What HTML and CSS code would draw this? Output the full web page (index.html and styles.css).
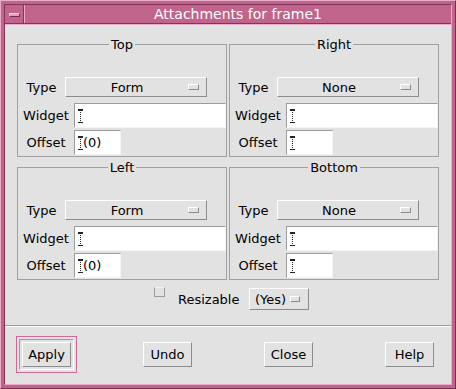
FILE: index.html
```html
<!DOCTYPE html>
<html lang="en">
<head>
  <meta charset="UTF-8">
  <title>Attachments for frame1</title>
  <link rel="stylesheet" href="styles.css">
</head>
<body>

  <div class="window">
    <div class="frame">

      <!-- Title bar -->
      <div class="titlebar">
        <div class="menu-btn"><span class="menu-bar"></span></div>
        <div class="title">Attachments for frame1</div>
      </div>

      <div class="content">

        <!-- Four attachment groups -->
        <div class="groups">

          <fieldset class="group">
            <legend>Top</legend>
            <div class="type-row">
              <span class="type-label">Type</span>
              <div class="option wide"><span class="option-text">Form</span><span class="indicator"></span></div>
            </div>
            <div class="field-row first">
              <span class="field-label">Widget</span>
              <div class="field long"><svg class="caret" width="5" height="14" viewBox="0 0 5 14"><path d="M0 0h2v1H0zM3 0h2v1H3zM0 13h2v1H0zM3 13h2v1H3z"/><line x1="2.5" y1="1" x2="2.5" y2="13" stroke-dasharray="1 1"/></svg></div>
            </div>
            <div class="field-row">
              <span class="field-label">Offset</span>
              <div class="field short"><svg class="caret" width="5" height="14" viewBox="0 0 5 14"><path d="M0 0h2v1H0zM3 0h2v1H3zM0 13h2v1H0zM3 13h2v1H3z"/><line x1="2.5" y1="1" x2="2.5" y2="13" stroke-dasharray="1 1"/></svg><span class="value">(0)</span></div>
            </div>
          </fieldset>

          <fieldset class="group">
            <legend>Right</legend>
            <div class="type-row">
              <span class="type-label">Type</span>
              <div class="option wide"><span class="option-text">None</span><span class="indicator"></span></div>
            </div>
            <div class="field-row first">
              <span class="field-label">Widget</span>
              <div class="field long"><svg class="caret" width="5" height="14" viewBox="0 0 5 14"><path d="M0 0h2v1H0zM3 0h2v1H3zM0 13h2v1H0zM3 13h2v1H3z"/><line x1="2.5" y1="1" x2="2.5" y2="13" stroke-dasharray="1 1"/></svg></div>
            </div>
            <div class="field-row">
              <span class="field-label">Offset</span>
              <div class="field short"><svg class="caret" width="5" height="14" viewBox="0 0 5 14"><path d="M0 0h2v1H0zM3 0h2v1H3zM0 13h2v1H0zM3 13h2v1H3z"/><line x1="2.5" y1="1" x2="2.5" y2="13" stroke-dasharray="1 1"/></svg></div>
            </div>
          </fieldset>

          <fieldset class="group">
            <legend>Left</legend>
            <div class="type-row">
              <span class="type-label">Type</span>
              <div class="option wide"><span class="option-text">Form</span><span class="indicator"></span></div>
            </div>
            <div class="field-row first">
              <span class="field-label">Widget</span>
              <div class="field long"><svg class="caret" width="5" height="14" viewBox="0 0 5 14"><path d="M0 0h2v1H0zM3 0h2v1H3zM0 13h2v1H0zM3 13h2v1H3z"/><line x1="2.5" y1="1" x2="2.5" y2="13" stroke-dasharray="1 1"/></svg></div>
            </div>
            <div class="field-row">
              <span class="field-label">Offset</span>
              <div class="field short"><svg class="caret" width="5" height="14" viewBox="0 0 5 14"><path d="M0 0h2v1H0zM3 0h2v1H3zM0 13h2v1H0zM3 13h2v1H3z"/><line x1="2.5" y1="1" x2="2.5" y2="13" stroke-dasharray="1 1"/></svg><span class="value">(0)</span></div>
            </div>
          </fieldset>

          <fieldset class="group">
            <legend>Bottom</legend>
            <div class="type-row">
              <span class="type-label">Type</span>
              <div class="option wide"><span class="option-text">None</span><span class="indicator"></span></div>
            </div>
            <div class="field-row first">
              <span class="field-label">Widget</span>
              <div class="field long"><svg class="caret" width="5" height="14" viewBox="0 0 5 14"><path d="M0 0h2v1H0zM3 0h2v1H3zM0 13h2v1H0zM3 13h2v1H3z"/><line x1="2.5" y1="1" x2="2.5" y2="13" stroke-dasharray="1 1"/></svg></div>
            </div>
            <div class="field-row">
              <span class="field-label">Offset</span>
              <div class="field short"><svg class="caret" width="5" height="14" viewBox="0 0 5 14"><path d="M0 0h2v1H0zM3 0h2v1H3zM0 13h2v1H0zM3 13h2v1H3z"/><line x1="2.5" y1="1" x2="2.5" y2="13" stroke-dasharray="1 1"/></svg></div>
            </div>
          </fieldset>

        </div>

        <!-- Resizable toggle -->
        <div class="resize-row">
          <span class="checkbox"></span>
          <span class="resize-label">Resizable</span>
          <div class="option small"><span class="option-text">(Yes)</span><span class="indicator"></span></div>
        </div>

        <div class="sep"></div>

        <!-- Action buttons -->
        <div class="buttons">
          <div class="focus"><div class="default-ring"><button type="button" class="btn">Apply</button></div></div>
          <button type="button" class="btn undo">Undo</button>
          <button type="button" class="btn close">Close</button>
          <button type="button" class="btn help">Help</button>
        </div>

      </div>
    </div>
  </div>

</body>
</html>
```

FILE: styles.css
```css
* {
  box-sizing: border-box;
}

body {
  margin: 0;
  font-family: "DejaVu Sans", sans-serif;
  font-size: 13px;
  color: #000;
}

/* window decoration */
.window {
  width: 456px;
  height: 389px;
  background-color: #c0648c;
  border: 1px solid;
  border-color: #e8aec8 #7c2c52 #7c2c52 #e8aec8;
  padding: 3px;
}

.frame {
  height: 100%;
  display: flex;
  flex-direction: column;
  border: 1px solid;
  border-color: #84345a #e8aec8 #e8aec8 #84345a;
}

.titlebar {
  display: flex;
  height: 19px;
  border-bottom: 1px solid #84345a;
  box-shadow: 0 1px 0 #e8aec8;
  margin-bottom: 1px;
}

.menu-btn {
  width: 19px;
  display: flex;
  align-items: center;
  justify-content: center;
  border-right: 1px solid #84345a;
}

.menu-bar {
  width: 11px;
  height: 4px;
  margin-top: 2px;
  background-color: #e0a0bc;
  border: 1px solid;
  border-color: #f4cfe0 #7c2c52 #7c2c52 #f4cfe0;
}

.title {
  flex: 1;
  border-left: 1px solid #e8aec8;
  color: #fff;
  text-align: center;
  line-height: 19px;
  font-size: 14px;
}

/* dialog body */
.content {
  flex: 1;
  background-color: #e2e2e2;
  display: flex;
  flex-direction: column;
}

.groups {
  display: grid;
  grid-template-columns: 210px 210px;
  column-gap: 2px;
  row-gap: 3px;
  margin: 12px 12px 0 12px;
}

.group {
  margin: 0;
  padding: 0 0 1px 0;
  min-width: 0;
  border: 1px solid #a0a0a0;
}

.group legend {
  margin: 0 auto;
  padding: 0 2px;
  line-height: 15px;
}

.type-row {
  display: flex;
  align-items: center;
  margin-top: 25px;
}

.type-label {
  width: 47px;
  text-align: center;
}

.option {
  display: flex;
  align-items: center;
  height: 20px;
  border: 1px solid;
  border-color: #fff #8c8c8c #8c8c8c #fff;
}

.option.wide {
  width: 142px;
}

.option-text {
  flex: 1;
  text-align: center;
}

.indicator {
  width: 11px;
  height: 6px;
  margin-right: 7px;
  border: 1px solid;
  border-color: #fff #8c8c8c #8c8c8c #fff;
}

.field-row {
  display: flex;
  align-items: center;
  margin-top: 2px;
}

.field-row.first {
  margin-top: 6px;
}

.field-label {
  width: 56px;
  text-align: center;
}

.field {
  display: flex;
  align-items: center;
  height: 25px;
  padding-left: 3px;
  background-color: #fff;
  border: 1px solid;
  border-color: #9c9c9c #f4f4f4 #f4f4f4 #9c9c9c;
}

.field.long {
  flex: 1;
}

.field.short {
  width: 47px;
}

.caret {
  shape-rendering: crispEdges;
  fill: #222;
  stroke: #222;
}

/* resizable row */
.resize-row {
  display: flex;
  align-items: center;
  margin: 8px 0 0 149px;
}

.checkbox {
  align-self: flex-start;
  width: 11px;
  height: 10px;
  margin-top: -1px;
  border: 1px solid;
  border-color: #f4f4f4 #9c9c9c #9c9c9c #9c9c9c;
}

.resize-label {
  margin-left: 13px;
}

.option.small {
  width: 60px;
  height: 22px;
  margin-left: 10px;
}

.option.small .indicator {
  width: 10px;
  margin-right: 8px;
}

.sep {
  height: 2px;
  margin-top: 15px;
  border-top: 1px solid #9c9c9c;
  border-bottom: 1px solid #fff;
}

/* buttons */
.buttons {
  display: flex;
  align-items: center;
  margin-top: 9px;
  padding-left: 11px;
}

.focus {
  border: 1px solid #d0689a;
  padding: 2px;
}

.default-ring {
  border: 1px solid;
  border-color: #9c9c9c #fff #fff #9c9c9c;
  padding: 2px;
}

.btn {
  width: 49px;
  height: 25px;
  padding: 0;
  font: inherit;
  color: #000;
  background-color: #e2e2e2;
  border: 1px solid;
  border-color: #fff #8c8c8c #8c8c8c #fff;
}

.undo {
  margin-left: 66px;
}

.close, .help {
  margin-left: 72px;
}
```
